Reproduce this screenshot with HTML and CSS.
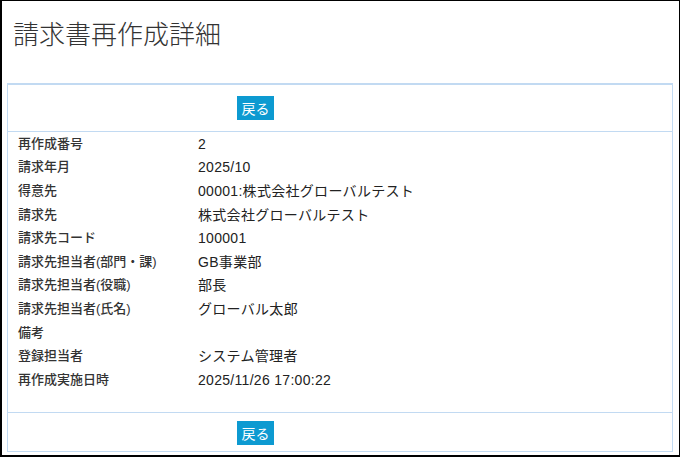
FILE: index.html
```html
<!DOCTYPE html>
<html>
<head>
<meta charset="utf-8"/>
<title>請求書再作成詳細</title>
<link rel="stylesheet" href="styles.css">
</head>
<body>
	<div class="page">
		<h1 class="title">請求書再作成詳細</h1>
		<div class="panel">
			<!-- 上部ボタン -->
			<div class="panel-head">
				<span class="btn">戻る</span>
			</div>
			<table class="detail">
				<tr><th>再作成番号</th><td>2</td></tr>
				<tr><th>請求年月</th><td>2025/10</td></tr>
				<tr><th>得意先</th><td>00001:株式会社グローバルテスト</td></tr>
				<tr><th>請求先</th><td>株式会社グローバルテスト</td></tr>
				<tr><th>請求先コード</th><td>100001</td></tr>
				<tr><th>請求先担当者(部門・課)</th><td>GB事業部</td></tr>
				<tr><th>請求先担当者(役職)</th><td>部長</td></tr>
				<tr><th>請求先担当者(氏名)</th><td>グローバル太郎</td></tr>
				<tr><th>備考</th><td></td></tr>
				<tr><th>登録担当者</th><td>システム管理者</td></tr>
				<tr><th>再作成実施日時</th><td>2025/11/26 17:00:22</td></tr>
			</table>
			<!-- 下部ボタン -->
			<div class="panel-foot">
				<span class="btn">戻る</span>
			</div>
		</div>
	</div>
</body>
</html>
```

FILE: styles.css
```css
*{padding: 0;margin: 0}
html,body{
	width: 100%;
	height: 100%;
	background: #fff;
}
body{
	font-family: "Liberation Sans", "Noto Sans CJK JP", sans-serif;
	font-size: 14px;
	color: #222;
}
.page{
	height: 457px;
	box-sizing: border-box;
	border: 1px solid #000;
	border-left-width: 2px;
	border-bottom-width: 2px;
}
.title{
	font-family: "Noto Sans CJK JP", sans-serif;
	font-size: 26px;
	line-height: 26px;
	font-weight: 300;
	color: #333;
	padding: 19px 0 0 11px;
	margin-bottom: 37px;
}
.panel{
	margin: 0 6px 0 5px;
	border: 1px solid #c2daf2;
	border-top-width: 2px;
}
.panel-head{
	padding: 11px 0;
	border-bottom: 1px solid #c2daf2;
}
.panel-foot{
	padding: 8px 0 6px;
	border-top: 1px solid #c2daf2;
}
.btn{
	display: block;
	width: 37px;
	height: 24px;
	line-height: 24px;
	margin-left: 229px;
	background: #0d9ad1;
	color: #fff;
	text-align: center;
	font-size: 14px;
	font-family: "Noto Sans CJK JP", sans-serif;
}
.detail{
	border-collapse: collapse;
	margin-bottom: 20px;
}
.detail th,
.detail td{
	height: 23.6px;
	padding: 0;
	text-align: left;
	vertical-align: middle;
	line-height: 16px;
}
.detail th{
	width: 180px;
	padding-left: 10px;
	font-family: "Liberation Sans", "Noto Sans CJK JP", sans-serif;
	font-size: 13px;
	font-weight: 500;
	color: #333;
}
.detail td{
	letter-spacing: 0.3px;
}
```
